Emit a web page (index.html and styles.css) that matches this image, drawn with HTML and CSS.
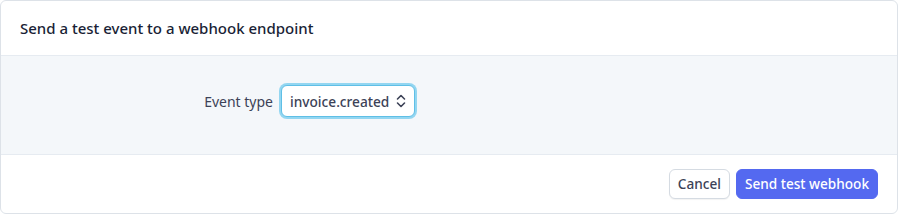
FILE: index.html
```html
<!DOCTYPE html>
<html lang="en">

<head>
    <meta charset="UTF-8">
    <meta name="viewport" content="width=device-width, initial-scale=1.0">
    <title>Send test webhook</title>
    <link rel="stylesheet" href="styles.css">
</head>

<body>
    <div class="modal">
        <div class="modal-head">
            <h2>Send a test event to a webhook endpoint</h2>
        </div>
        <div class="modal-body">
            <div class="field">
                <label for="event-type">Event type</label>
                <div class="select-wrap">
                    <span class="select-text">invoice.created</span>
                    <svg class="chevrons" width="10" height="14" viewBox="0 0 10 14">
                        <path d="M1.5 5 L5 1.5 L8.5 5 M1.5 9 L5 12.5 L8.5 9" fill="none" stroke="#3c4257" stroke-width="1.6" stroke-linecap="round" stroke-linejoin="round"/>
                    </svg>
                </div>
            </div>
        </div>
        <div class="modal-foot">
            <button class="btn btn-default">Cancel</button>
            <button class="btn btn-primary">Send test webhook</button>
        </div>
    </div>
</body>

</html>
```

FILE: styles.css
```css
* {
    margin: 0;
    padding: 0;
    box-sizing: border-box;
}

body {
    background-color: #fff;
    font-family: "Noto Sans", "Open Sans", sans-serif;
    color: #3c4257;
}

.modal {
    width: 898px;
    height: 214px;
    border: 1px solid #dde2e8;
    border-radius: 6px;
    overflow: hidden;
    display: flex;
    flex-direction: column;
}

.modal-head {
    height: 55px;
    padding: 0 19px;
    display: flex;
    align-items: center;
    border-bottom: 1px solid #e6ebf1;
}

.modal-head h2 {
    font-size: 15px;
    font-weight: 500;
    color: #1a1f36;
}

.modal-body {
    height: 99px;
    background-color: #f4f7fa;
    border-bottom: 1px solid #e6ebf1;
    padding-top: 29px;
}

.field {
    display: flex;
    align-items: center;
}

.field label {
    width: 280px;
    text-align: right;
    font-size: 14px;
    color: #3c4257;
    padding-right: 8px;
}

.select-wrap {
    display: flex;
    align-items: center;
    gap: 7px;
    height: 32px;
    padding: 0 8px;
    background-color: #fff;
    border: 1px solid #5fbfe6;
    border-radius: 6px;
    box-shadow: 0 0 0 2px #93d6f1;
}

.select-text {
    font-size: 13.7px;
    font-weight: 500;
    color: #3c4257;
}

.chevrons {
    display: block;
}

.modal-foot {
    flex: 1;
    display: flex;
    justify-content: flex-end;
    align-items: center;
    gap: 6px;
    padding-right: 19px;
    padding-bottom: 1px;
}

.btn {
    height: 30px;
    border-radius: 6px;
    font-family: inherit;
    font-size: 13.6px;
    font-weight: 500;
    padding: 0 8px;
}

.btn-default {
    background-color: #fff;
    color: #3c4257;
    border: 1px solid #d5dbe2;
    box-shadow: 0 1px 1px rgba(0, 0, 0, 0.05);
}

.btn-primary {
    background-color: #5469f0;
    color: #fff;
    border: 1px solid #5469f0;
}
```
